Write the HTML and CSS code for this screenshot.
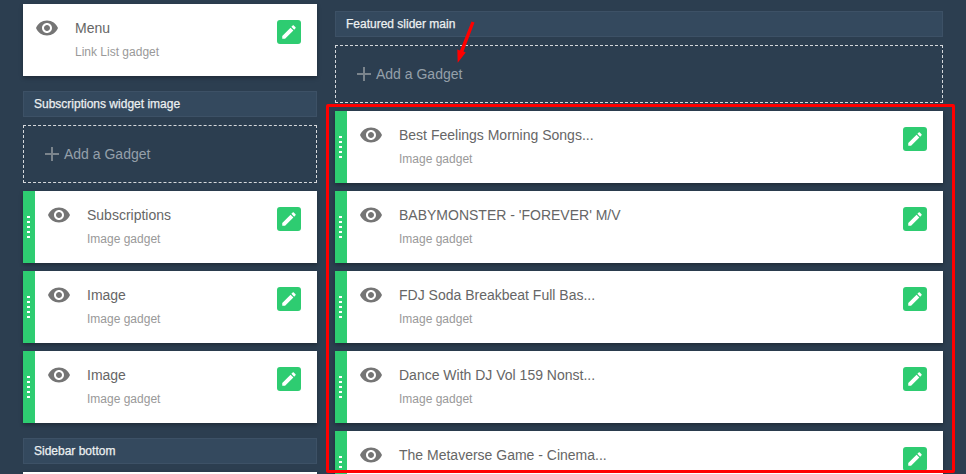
FILE: index.html
```html
<!doctype html>
<html lang="en">
  <head>
    <meta charset="UTF-8" />
    <title>Layout</title>
    <link rel="stylesheet" href="styles.css">
  </head>
  <body>
    <svg width="0" height="0" class="defs">
      <symbol id="eye" viewBox="0 0 24 24">
        <path d="M12 4.5C7 4.5 2.73 7.61 1 12c1.73 4.39 6 7.5 11 7.5s9.27-3.11 11-7.5c-1.73-4.39-6-7.5-11-7.5zM12 17c-2.76 0-5-2.24-5-5s2.24-5 5-5 5 2.24 5 5-2.24 5-5 5zm0-8c-1.66 0-3 1.34-3 3s1.34 3 3 3 3-1.34 3-3-1.34-3-3-3z" />
      </symbol>
      <symbol id="pencil" viewBox="0 0 24 24">
        <path d="M3 17.25V21h3.75L17.81 9.94l-3.75-3.75L3 17.25zM20.71 7.04c.39-.39.39-1.02 0-1.41l-2.34-2.34c-.39-.39-1.02-.39-1.41 0l-1.83 1.83 3.75 3.75 1.83-1.83z" />
      </symbol>
    </svg>

    <div class="layout">
      <div class="column column-left">
        <div class="gadget">
          <svg class="eye"><use href="#eye" /></svg>
          <div class="gadget-text">
            <div class="gadget-title">Menu</div>
            <div class="gadget-type">Link List gadget</div>
          </div>
          <a class="edit"><svg><use href="#pencil" /></svg></a>
        </div>

        <div class="section section-spaced">Subscriptions widget image</div>
        <div class="add-gadget"><span class="plus"></span>Add a Gadget</div>

        <div class="gadget draggable">
          <span class="handle"></span>
          <svg class="eye"><use href="#eye" /></svg>
          <div class="gadget-text">
            <div class="gadget-title">Subscriptions</div>
            <div class="gadget-type">Image gadget</div>
          </div>
          <a class="edit"><svg><use href="#pencil" /></svg></a>
        </div>
        <div class="gadget draggable">
          <span class="handle"></span>
          <svg class="eye"><use href="#eye" /></svg>
          <div class="gadget-text">
            <div class="gadget-title">Image</div>
            <div class="gadget-type">Image gadget</div>
          </div>
          <a class="edit"><svg><use href="#pencil" /></svg></a>
        </div>
        <div class="gadget draggable">
          <span class="handle"></span>
          <svg class="eye"><use href="#eye" /></svg>
          <div class="gadget-text">
            <div class="gadget-title">Image</div>
            <div class="gadget-type">Image gadget</div>
          </div>
          <a class="edit"><svg><use href="#pencil" /></svg></a>
        </div>

        <div class="section section-spaced">Sidebar bottom</div>
        <div class="gadget"></div>
      </div>

      <div class="column column-right">
        <div class="section">Featured slider main</div>
        <div class="add-gadget"><span class="plus"></span>Add a Gadget</div>

        <div class="gadget draggable">
          <span class="handle"></span>
          <svg class="eye"><use href="#eye" /></svg>
          <div class="gadget-text">
            <div class="gadget-title">Best Feelings Morning Songs...</div>
            <div class="gadget-type">Image gadget</div>
          </div>
          <a class="edit"><svg><use href="#pencil" /></svg></a>
        </div>
        <div class="gadget draggable">
          <span class="handle"></span>
          <svg class="eye"><use href="#eye" /></svg>
          <div class="gadget-text">
            <div class="gadget-title">BABYMONSTER - 'FOREVER' M/V</div>
            <div class="gadget-type">Image gadget</div>
          </div>
          <a class="edit"><svg><use href="#pencil" /></svg></a>
        </div>
        <div class="gadget draggable">
          <span class="handle"></span>
          <svg class="eye"><use href="#eye" /></svg>
          <div class="gadget-text">
            <div class="gadget-title">FDJ Soda Breakbeat Full Bas...</div>
            <div class="gadget-type">Image gadget</div>
          </div>
          <a class="edit"><svg><use href="#pencil" /></svg></a>
        </div>
        <div class="gadget draggable">
          <span class="handle"></span>
          <svg class="eye"><use href="#eye" /></svg>
          <div class="gadget-text">
            <div class="gadget-title">Dance With DJ Vol 159 Nonst...</div>
            <div class="gadget-type">Image gadget</div>
          </div>
          <a class="edit"><svg><use href="#pencil" /></svg></a>
        </div>
        <div class="gadget draggable">
          <span class="handle"></span>
          <svg class="eye"><use href="#eye" /></svg>
          <div class="gadget-text">
            <div class="gadget-title">The Metaverse Game - Cinema...</div>
          </div>
          <a class="edit"><svg><use href="#pencil" /></svg></a>
        </div>
      </div>
    </div>

    <!-- red annotations over the screenshot -->
    <div class="highlight"></div>
    <svg class="arrow" width="24" height="46" viewBox="0 0 24 46">
      <polygon points="15.5,1.5 18.5,2.5 7.5,31.5 9.7,32.5 1.7,42.7 1.3,29.5 4,30.5" />
    </svg>
  </body>
</html>
```

FILE: styles.css
```css
html,
body {
  margin: 0;
  height: 474px;
  overflow: hidden;
}
body {
  position: relative;
  background: #2c3e50;
  font-family: "Liberation Sans", Arial, sans-serif;
}
.defs {
  position: absolute;
}
.layout {
  display: flex;
  gap: 18px;
  padding-left: 23px;
}
.column {
  display: flex;
  flex-direction: column;
  gap: 8px;
}
.column-left {
  width: 294px;
  padding-top: 4px;
}
.column-right {
  width: 608px;
  padding-top: 11px;
}
.section {
  height: 26px;
  box-sizing: border-box;
  padding-left: 10px;
  background: #34495e;
  border: 1px solid #3d5166;
  color: #ecf0f1;
  font-size: 12px;
  line-height: 24px;
  -webkit-text-stroke: 0.25px #ecf0f1;
}
.section-spaced {
  margin-top: 7px;
}
.add-gadget {
  display: flex;
  align-items: center;
  gap: 5px;
  height: 58px;
  box-sizing: border-box;
  padding-left: 21px;
  border: 1px dashed #d5d8dc;
  color: #95a0aa;
  font-size: 14px;
}
.plus {
  width: 14px;
  height: 14px;
  background:
    linear-gradient(#7b848c, #7b848c) center / 14px 2px no-repeat,
    linear-gradient(#7b848c, #7b848c) center / 2px 14px no-repeat;
}
.gadget {
  display: flex;
  flex: none;
  height: 72px;
  background: #fff;
  box-shadow: 0 2px 4px rgba(0, 0, 0, 0.3);
}
.handle {
  flex: none;
  display: flex;
  align-items: center;
  justify-content: center;
  box-sizing: border-box;
  width: 12px;
  padding-right: 1px;
  background: #2ecc71;
}
.handle::before {
  content: "";
  width: 3px;
  height: 22px;
  background: repeating-linear-gradient(#fff 0 2px, transparent 2px 5px);
}
.eye {
  flex: none;
  width: 24px;
  height: 24px;
  margin: 12px 16px 0 12px;
  fill: #757575;
}
.gadget-text {
  flex: 1;
  padding-top: 15px;
}
.gadget-title {
  color: #666;
  font-size: 14px;
  line-height: 18px;
}
.gadget-type {
  margin-top: 7px;
  color: #999;
  font-size: 12px;
  line-height: 16px;
}
.edit {
  flex: none;
  display: flex;
  align-items: center;
  justify-content: center;
  width: 24px;
  height: 24px;
  margin: 16px 16px 0 0;
  background: #2ecc71;
  border-radius: 3px;
}
.edit svg {
  width: 18px;
  height: 18px;
  fill: #fff;
}
.highlight {
  position: absolute;
  left: 326px;
  top: 104px;
  width: 629px;
  height: 369px;
  box-sizing: border-box;
  border: 3px solid #f00;
  border-radius: 2px;
}
.arrow {
  position: absolute;
  left: 456px;
  top: 20px;
}
.arrow polygon {
  fill: #f00;
}
```
